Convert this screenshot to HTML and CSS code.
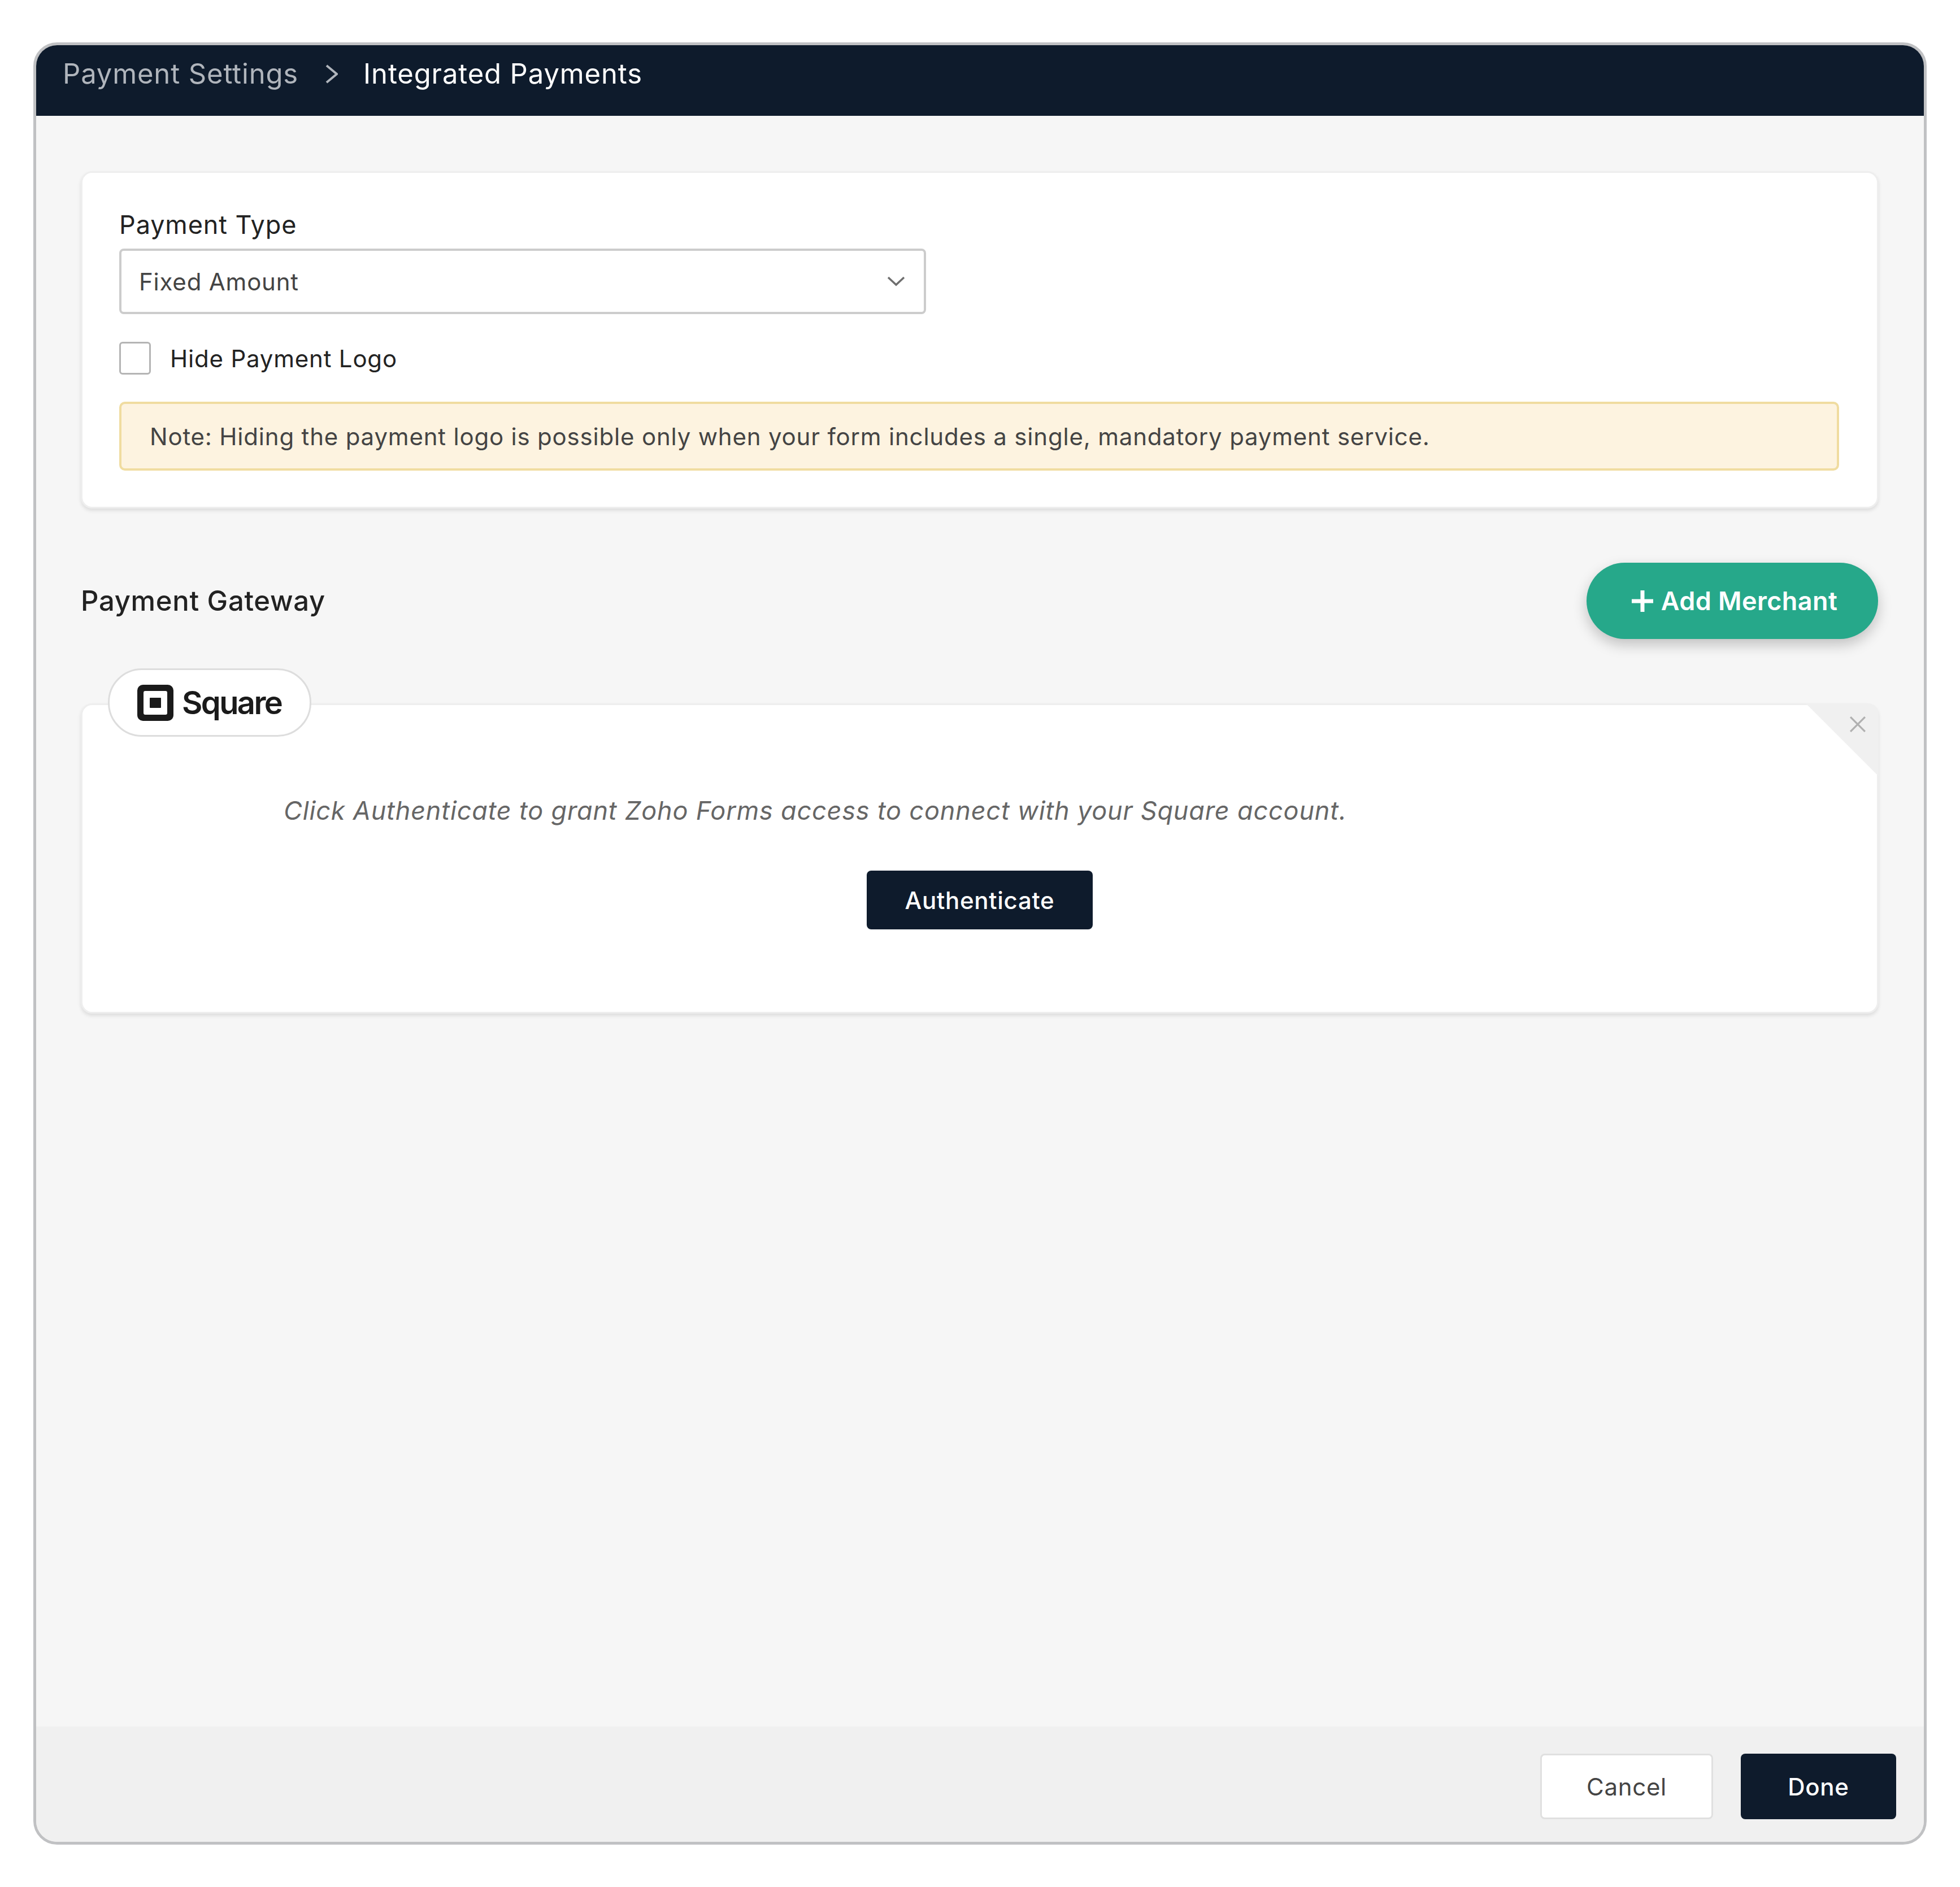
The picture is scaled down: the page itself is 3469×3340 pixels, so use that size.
FILE: index.html
```html
<!DOCTYPE html>
<html>
    <head>
        <meta content="text/html;charset=utf-8" http-equiv="Content-Type">
        <title>Integrated Payments</title>
        <link rel="stylesheet" href="styles.css">
    </head>
    <body>
        <div class="dialog">
            <div class="dialogHeader">
                <span class="crumbParent">Payment Settings</span>
                <svg class="crumbArrow" viewBox="0 0 22 34"><path d="M2 2 L20 17 L2 32"/></svg>
                <span class="crumbCurrent">Integrated Payments</span>
            </div>

            <div class="dialogBody">
                <div class="card typeCard">
                    <div class="fieldLabel">Payment Type</div>
                    <div class="selectBox">
                        <span>Fixed Amount</span>
                        <svg class="selectArrow" viewBox="0 0 32 18"><path d="M2 2 L16 15 L30 2"/></svg>
                    </div>
                    <div class="checkRow">
                        <span class="checkBox"></span>
                        <span>Hide Payment Logo</span>
                    </div>
                    <div class="note">Note: Hiding the payment logo is possible only when your form includes a single, mandatory payment service.</div>
                </div>

                <div class="gatewayHead">
                    <div class="gatewayTitle">Payment Gateway</div>
                    <button class="addBtn">
                        <svg class="addIcon" viewBox="0 0 38 38"><path d="M19 0 V38 M0 19 H38"/></svg>
                        Add Merchant
                    </button>
                </div>

                <div class="card gatewayCard">
                    <div class="logoPill">
                        <svg class="squareIcon" viewBox="0 0 64 64">
                            <path fill-rule="evenodd" d="M10 0 H54 A10 10 0 0 1 64 10 V54 A10 10 0 0 1 54 64 H10 A10 10 0 0 1 0 54 V10 A10 10 0 0 1 10 0 Z M14 11 A3 3 0 0 0 11 14 V50 A3 3 0 0 0 14 53 H50 A3 3 0 0 0 53 50 V14 A3 3 0 0 0 50 11 Z"/>
                            <rect x="22" y="23" width="20" height="18" rx="1"/>
                        </svg>
                        <span class="squareName">Square</span>
                    </div>
                    <div class="cornerFold">
                        <svg class="closeIcon" viewBox="0 0 26 26"><path d="M1 1 L25 25 M25 1 L1 25"/></svg>
                    </div>
                    <p class="authText">Click Authenticate to grant Zoho Forms access to connect with your Square account.</p>
                    <button class="darkBtn authBtn">Authenticate</button>
                </div>
            </div>

            <div class="dialogFooter">
                <button class="cancelBtn">Cancel</button>
                <button class="darkBtn doneBtn">Done</button>
            </div>
        </div>
    </body>
</html>
```

FILE: styles.css
```css
body{
    margin: 0;
    background-color: #ffffff;
    font-family: 'Inter', 'Liberation Sans', sans-serif;
    font-optical-sizing: none;
    color: #222222;
    font-size: 42px;
    letter-spacing: 0.8px;
}

button{
    font-family: inherit;
    font-optical-sizing: none;
    letter-spacing: 0.7px;
    cursor: pointer;
}

.dialog{
    width: 3351px;
    height: 3190px;
    margin: 75px 0 75px 59px;
    box-sizing: border-box;
    border: 5px solid #c0c1c3;
    border-radius: 42px;
    overflow: hidden;
    display: flex;
    flex-direction: column;
    background-color: #f6f6f6;
}

.dialogHeader{
    height: 125px;
    flex: none;
    background-color: #0e1b2c;
    display: flex;
    align-items: center;
    padding: 0 0 24px 47px;
    box-sizing: border-box;
    font-size: 49px;
    letter-spacing: 0.85px;
}
.crumbParent{
    color: #b0b5bc;
}
.crumbCurrent{
    color: #ffffff;
}
.crumbArrow{
    width: 22px;
    height: 34px;
    margin: 0 45px 0 48px;
}
.crumbArrow path{
    fill: none;
    stroke: #b0b5bc;
    stroke-width: 4;
}

.dialogBody{
    flex: 1;
    padding: 98px 80px 0 79px;
}

.card{
    background-color: #ffffff;
    border: 3px solid #eeeeee;
    border-radius: 20px;
    box-shadow: 0 4px 6px rgba(0, 0, 0, 0.1);
}

.typeCard{
    height: 597px;
    box-sizing: border-box;
    padding: 56px 67px 0 65px;
}
.fieldLabel{
    line-height: 72px;
    font-size: 45px;
    letter-spacing: 0.9px;
}
.selectBox{
    width: 1428px;
    height: 116px;
    box-sizing: border-box;
    border: 4px solid #cccccc;
    border-radius: 8px;
    margin-top: 6px;
    display: flex;
    align-items: center;
    justify-content: space-between;
    padding: 0 33px 0 31px;
    color: #444444;
}
.selectArrow{
    width: 32px;
    height: 18px;
}
.selectArrow path{
    fill: none;
    stroke: #6e6e6e;
    stroke-width: 3.5;
}
.checkRow{
    display: flex;
    align-items: center;
    margin-top: 49px;
    height: 58px;
}
.checkBox{
    width: 56px;
    height: 58px;
    box-sizing: border-box;
    border: 3px solid #b4b4b4;
    border-radius: 6px;
    margin-right: 34px;
    background-color: #ffffff;
}
.note{
    margin-top: 48px;
    height: 122px;
    box-sizing: border-box;
    background-color: #fdf3e0;
    border: 4px solid #f0dca0;
    border-radius: 10px;
    display: flex;
    align-items: center;
    padding-left: 50px;
    color: #444444;
}

.gatewayHead{
    margin-top: 96px;
    height: 135px;
    display: flex;
    align-items: center;
    justify-content: space-between;
}
.gatewayTitle{
    font-size: 49px;
    font-weight: 500;
    letter-spacing: 0.7px;
}
.addBtn{
    width: 516px;
    height: 135px;
    margin-right: 1px;
    padding: 0 0 0 8px;
    border: 0;
    border-radius: 68px;
    background-color: #26a88a;
    color: #ffffff;
    font-size: 45px;
    font-weight: 600;
    letter-spacing: 0.4px;
    display: flex;
    align-items: center;
    justify-content: center;
    gap: 14px;
    box-shadow: 0 10px 24px rgba(0, 0, 0, 0.22);
}
.addIcon{
    width: 38px;
    height: 38px;
}
.addIcon path{
    stroke: #ffffff;
    stroke-width: 7;
}

.gatewayCard{
    position: relative;
    margin-top: 114px;
    height: 549px;
    box-sizing: border-box;
    display: flex;
    flex-direction: column;
    align-items: center;
}
.logoPill{
    position: absolute;
    top: -65px;
    left: 45px;
    width: 360px;
    height: 121px;
    box-sizing: border-box;
    border: 3px solid #dddddd;
    border-radius: 60px;
    background-color: #ffffff;
    display: flex;
    align-items: center;
    padding-left: 49px;
}
.squareIcon{
    width: 64px;
    height: 64px;
    fill: #1a1a1a;
}
.squareName{
    margin-left: 15px;
    font-size: 56px;
    font-weight: 600;
    letter-spacing: -2.6px;
    color: #1a1a1a;
}
.cornerFold{
    position: absolute;
    top: -3px;
    right: -3px;
    width: 129px;
    height: 129px;
    background-color: #f0f0f0;
    clip-path: polygon(0 0, 100% 0, 100% 100%);
    border-top-right-radius: 20px;
}
.closeIcon{
    position: absolute;
    top: 23px;
    right: 23px;
    width: 28px;
    height: 28px;
}
.closeIcon path{
    stroke: #b0b0b0;
    stroke-width: 3;
}

.authText{
    margin: 155px 0 0 0;
    align-self: flex-start;
    padding-left: 356px;
    font-style: italic;
    color: #666666;
    font-size: 45px;
    letter-spacing: 0.83px;
    line-height: 64px;
}
.darkBtn{
    border: 0;
    border-radius: 8px;
    background-color: #0e1b2c;
    color: #ffffff;
    font-size: 42px;
    font-weight: 500;
}
.authBtn{
    width: 400px;
    height: 104px;
    margin-top: 74px;
}

.dialogFooter{
    height: 204px;
    flex: none;
    background-color: #f0f0f0;
    display: flex;
    justify-content: flex-end;
    align-items: flex-start;
    padding: 48px 49px 0 0;
    box-sizing: border-box;
    gap: 49px;
}
.cancelBtn{
    width: 306px;
    height: 116px;
    border: 3px solid #e0e0e0;
    border-radius: 8px;
    background-color: #ffffff;
    color: #444444;
    font-size: 42px;
}
.doneBtn{
    width: 275px;
    height: 116px;
}
```
